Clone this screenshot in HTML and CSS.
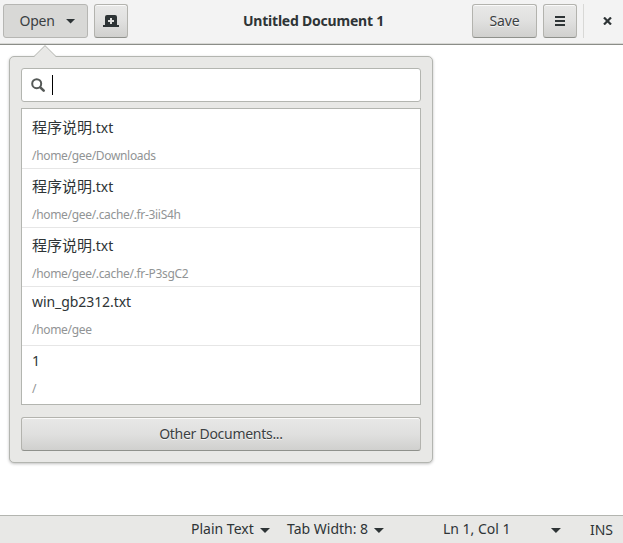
FILE: index.html
```html
<!DOCTYPE html>
<html lang="en">
<head>
<meta charset="utf-8">
<title>Untitled Document 1</title>
<link rel="stylesheet" href="styles.css">
</head>
<body>
<div class="window">
  <header class="headerbar">
    <button class="btn btn-open active"><span class="label-open">Open</span><i class="caret"></i></button>
    <button class="btn btn-icon btn-new" aria-label="New tab">
      <svg width="16" height="12" viewBox="0 0 16 12"><path fill="#2e3436" fill-rule="evenodd" d="M0 10h2V2Q2 0 4 0h8Q14 0 14 2v8h2v2H0zM7 3v2H5v2h2v2h2V7h2V5H9V3z"/></svg>
    </button>
    <h1 class="title">Untitled Document 1</h1>
    <button class="btn btn-save">Save</button>
    <button class="btn btn-icon btn-menu" aria-label="Menu">
      <svg width="10" height="10" viewBox="0 0 10 10"><path fill="#2e3436" d="M0 0h10v2H0zM0 4h10v2H0zM0 8h10v2H0z"/></svg>
    </button>
    <span class="separator"></span>
    <button class="close" aria-label="Close">
      <svg width="9" height="8" viewBox="0 0 9 8"><path stroke="#2e3436" stroke-width="2.200" d="M1 .5l7 7M8 .5l-7 7"/></svg>
    </button>
  </header>

  <main class="editor">
    <section class="popover">
      <svg class="pointer" width="24" height="13" viewBox="0 0 24 13"><path fill="#e8e8e6" d="M1 13v-1.500L12 .5l11 11V13z"/><path fill="none" stroke="#b3b5b0" d="M0 11.500h1L12 .6l11 10.900h1"/></svg>
      <div class="search">
        <svg width="15" height="15" viewBox="0 0 15 15"><circle cx="5.700" cy="5.700" r="4.500" fill="none" stroke="#555957" stroke-width="2"/><path stroke="#555957" stroke-width="2.600" stroke-linecap="round" d="M9.300 9.300l3.400 3.400"/></svg>
        <span class="cursor"></span>
      </div>
      <ul class="list">
        <li class="cjk"><span class="name"><span class="han">程序说明</span>.txt</span><span class="path">/home/gee/Downloads</span></li>
        <li class="cjk"><span class="name"><span class="han">程序说明</span>.txt</span><span class="path">/home/gee/.cache/.fr-3iiS4h</span></li>
        <li class="cjk"><span class="name"><span class="han">程序说明</span>.txt</span><span class="path">/home/gee/.cache/.fr-P3sgC2</span></li>
        <li><span class="name">win_gb2312.txt</span><span class="path">/home/gee</span></li>
        <li><span class="name">1</span><span class="path">/</span></li>
      </ul>
      <button class="btn btn-other">Other Documents...</button>
    </section>
  </main>

  <footer class="statusbar">
    <span class="status lang"><span>Plain Text</span><i class="caret"></i></span>
    <span class="status tabs"><span>Tab Width: 8</span><i class="caret"></i></span>
    <span class="status pos"><span>Ln 1, Col 1</span><i class="caret"></i></span>
    <span class="status mode">INS</span>
  </footer>
</div>
</body>
</html>
```
FILE: styles.css
```css
* { box-sizing: border-box; }

body {
  margin: 0;
  font: 14px/20px "Noto Sans", "Noto Sans CJK SC", sans-serif;
  color: #2e3436;
  background: #fff;
}

.window {
  display: flex;
  flex-direction: column;
  width: 623px;
  height: 543px;
  overflow: hidden;
}

.headerbar {
  display: flex;
  align-items: flex-start;
  height: 45px;
  padding: 4px 0 0 3px;
  background: #f3f3f3;
  border-bottom: 1px solid #8b8d88;
  box-shadow: inset 0 -1px #d8d8d5;
}

.btn {
  display: flex;
  align-items: center;
  justify-content: center;
  height: 34px;
  padding: 0;
  font: inherit;
  color: #3b4042;
  background: linear-gradient(#e8e8e7, #e0e0df 50%, #d0d0ce);
  border: 1px solid #b3b3ae;
  border-bottom-color: #8f918c;
  border-radius: 3px;
  box-shadow: inset 0 1px #fafafa;
  text-shadow: 0 1px rgba(255, 255, 255, .75);
}

.btn.active {
  background: #d8d8d6;
  border-color: #b6b6b3;
  box-shadow: none;
  text-shadow: none;
}

.caret {
  width: 10px;
  height: 5px;
  background: #2e3436;
  clip-path: polygon(0 0, 100% 0, 50% 100%);
}

.btn-open { width: 85px; gap: 11px; padding-left: 4px; letter-spacing: -.25px; }
.btn-icon { width: 34px; }
.btn-new { margin-left: 6px; }
.btn-save { width: 65px; letter-spacing: -.1px; }
.btn-menu { margin-left: 6px; }

.title {
  flex: 1;
  margin: 7px 0 0;
  padding-left: 27px;
  font-size: 14px;
  line-height: 20px;
  letter-spacing: -.22px;
  text-align: center;
  white-space: nowrap;
}

.separator {
  width: 1px;
  height: 34px;
  margin-left: 6px;
  background: #d8d8d6;
}

.close {
  display: flex;
  align-items: center;
  justify-content: center;
  width: 39px;
  height: 34px;
  padding: 0 0 0 7px;
  background: none;
  border: 0;
}

.editor { flex: 1; padding: 11px 0 0 9px; }

.popover {
  position: relative;
  width: 424px;
  height: 407px;
  padding: 11px;
  background: #e8e8e6;
  border: 1px solid #b3b5b0;
  border-radius: 5px;
  box-shadow: 0 1px 3px rgba(0, 0, 0, .25);
}

.pointer { position: absolute; left: 23px; top: -12px; }

.search {
  display: flex;
  align-items: center;
  gap: 6px;
  height: 34px;
  padding-left: 9px;
  background: #fff;
  border: 1px solid #b3b5b0;
  border-radius: 3px;
}

.cursor { width: 1px; height: 20px; background: #000; }

.list {
  height: 297px;
  margin: 6px 0 12px;
  padding: 1px 0 0;
  list-style: none;
  background: #fff;
  border: 1px solid #b3b5b0;
}

.list li {
  display: flex;
  flex-direction: column;
  height: 59px;
  padding: 5px 10px 0;
  border-bottom: 1px solid #e6e6e6;
}

.list li:last-child { border-bottom: 0; }
.name { height: 20px; letter-spacing: -.07px; white-space: nowrap; }
.path { margin-top: 8px; font-size: 12px; letter-spacing: -.32px; color: #919495; }
.list .cjk { padding-top: 7px; }
.cjk .name { letter-spacing: 0; }
.cjk .path { margin-top: 9px; }
.han { font: 15px/20px "Noto Sans CJK SC", sans-serif; }

.btn-other { width: 100%; letter-spacing: -.28px; }

.statusbar {
  display: flex;
  height: 28px;
  padding: 3px 10px 0 191px;
  background: #e8e8e6;
  border-top: 1px solid #b3b5b0;
  white-space: nowrap;
}

.status { display: flex; justify-content: space-between; }
.status .caret { margin-top: 9px; }
.lang { width: 79px; }
.tabs { width: 97px; margin-left: 17px; }
.pos { width: 118px; margin-left: 59px; }
.mode { margin-left: 29px; padding-top: 1px; }
```
